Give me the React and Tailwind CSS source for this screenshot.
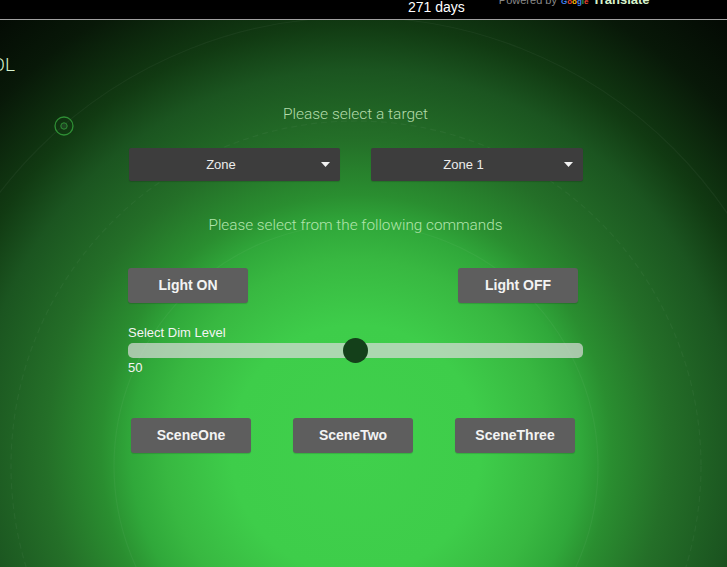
import React from "react";

function Caret() {
  return (
    <svg width="9" height="5" viewBox="0 0 9 5" className="block">
      <path d="M0 0 H9 L4.5 5 Z" fill="#f2f2f2" />
    </svg>
  );
}

function Select({ label, w }) {
  return (
    <div className={`${w} h-[33px] bg-[#3d3d3d] rounded-[2px] flex items-center relative shadow-[0_1px_1px_rgba(0,0,0,0.15)]`}>
      <span className="flex-1 text-center text-[13px] text-[#ececec] pr-[27px]">{label}</span>
      <span className="absolute right-[10px] top-[14px]">
        <Caret />
      </span>
    </div>
  );
}

function Btn({ children }) {
  return (
    <button className="w-[120px] h-[35px] bg-[#5e5e5e] rounded-[3px] text-[14px] font-bold text-[#f3f3f3] flex items-center justify-center shadow-[0_1px_1px_rgba(0,0,0,0.15)]">
      {children}
    </button>
  );
}

export default function App() {
  return (
    <div
      className="relative w-[727px] h-[567px] overflow-hidden bg-[radial-gradient(circle_500px_at_356px_450px,#40d04c_0%,#3ecd4a_25%,#38b841_38%,#30a83a_45%,#2a8e30_51%,#246f28_62%,#1b5520_76%,#113a12_85%,#081808_100%,#030803_115%)]"
      style={{ fontFamily: '"Liberation Sans", Arial, sans-serif' }}
    >
      <svg
        className="absolute left-0 top-0 pointer-events-none"
        width="727"
        height="567"
        viewBox="0 0 727 567"
      >
        <circle cx="356" cy="466" r="242" fill="none" stroke="rgba(255,255,255,0.045)" strokeWidth="1.2" />
        <circle cx="356" cy="466" r="345" fill="none" stroke="rgba(255,255,255,0.045)" strokeWidth="1.2" strokeDasharray="6 4" />
        <circle cx="356" cy="466" r="449" fill="none" stroke="rgba(255,255,255,0.045)" strokeWidth="1.2" />
      </svg>

      {/* top bar */}
      <div className="relative h-[20px] bg-black border-b border-[#a0a0a0] flex items-start overflow-hidden">
        <span className="ml-[408px] mt-[-3px] text-[14px] text-white leading-normal whitespace-nowrap">271 days</span>
        <span className="ml-[34px] mt-[-10px] flex items-baseline whitespace-nowrap leading-normal">
          <span className="text-[11px] text-[#8a8a8a]">Powered by</span>
          <span className="ml-[4px] text-[8px] font-bold">
            <span className="text-[#4285f4]">G</span>
            <span className="text-[#ea4335]">o</span>
            <span className="text-[#fbbc05]">o</span>
            <span className="text-[#4285f4]">g</span>
            <span className="text-[#34a853]">l</span>
            <span className="text-[#ea4335]">e</span>
          </span>
          <span className="ml-[4px] text-[13px] font-bold text-[#d8f2cc]">Translate</span>
        </span>
      </div>

      <div className="relative flex">
        {/* left column */}
        <div className="w-[128px] flex flex-col">
          <div className="mt-[31px] w-[15px] overflow-hidden flex justify-end">
            <span
              className="text-[19px] font-light text-[#d6f3cf] whitespace-nowrap leading-normal"
              style={{ fontFamily: "Roboto, sans-serif" }}
            >
              CONTROL
            </span>
          </div>
          <div className="mt-[36px] ml-[54px]">
            <svg width="20" height="20" viewBox="0 0 20 20" className="block">
              <circle cx="10" cy="10" r="9" fill="none" stroke="#2f8f35" strokeWidth="1.3" />
              <circle cx="10" cy="10" r="3.2" fill="#1e4421" stroke="#2f8f35" strokeWidth="1" />
            </svg>
          </div>
        </div>

        {/* main column */}
        <div className="w-[455px] flex flex-col">
          <div
            className="mt-[82px] text-center text-[15.5px] leading-[24px] font-light text-[#b3dcab]"
            style={{ fontFamily: "Roboto, sans-serif" }}
          >
            Please select a target
          </div>

          <div className="mt-[22px] pl-[1px] flex justify-between">
            <Select label="Zone" w="w-[211px]" />
            <Select label="Zone 1" w="w-[212px]" />
          </div>

          <div
            className="mt-[32px] text-center text-[15.3px] leading-[24px] font-light text-[#b2e5ac]"
            style={{ fontFamily: "Roboto, sans-serif" }}
          >
            Please select from the following commands
          </div>

          <div className="mt-[31px] pr-[5px] flex justify-between">
            <Btn>Light ON</Btn>
            <Btn>Light OFF</Btn>
          </div>

          <div className="mt-[22px] text-[13px] leading-[15px] text-[#f4f4f4]">Select Dim Level</div>

          <div className="mt-[3px] relative h-[15px] rounded-[5px] bg-[rgba(220,220,220,0.7)]">
            <div className="absolute left-[215px] top-[-5px] w-[25px] h-[25px] rounded-full bg-[#14401a]" />
          </div>

          <div className="mt-[2px] text-[13px] leading-[15px] text-[#f4f4f4]">50</div>

          <div className="mt-[43px] pl-[3px] flex gap-[42px]">
            <Btn>SceneOne</Btn>
            <Btn>SceneTwo</Btn>
            <Btn>SceneThree</Btn>
          </div>
        </div>
      </div>
    </div>
  );
}
